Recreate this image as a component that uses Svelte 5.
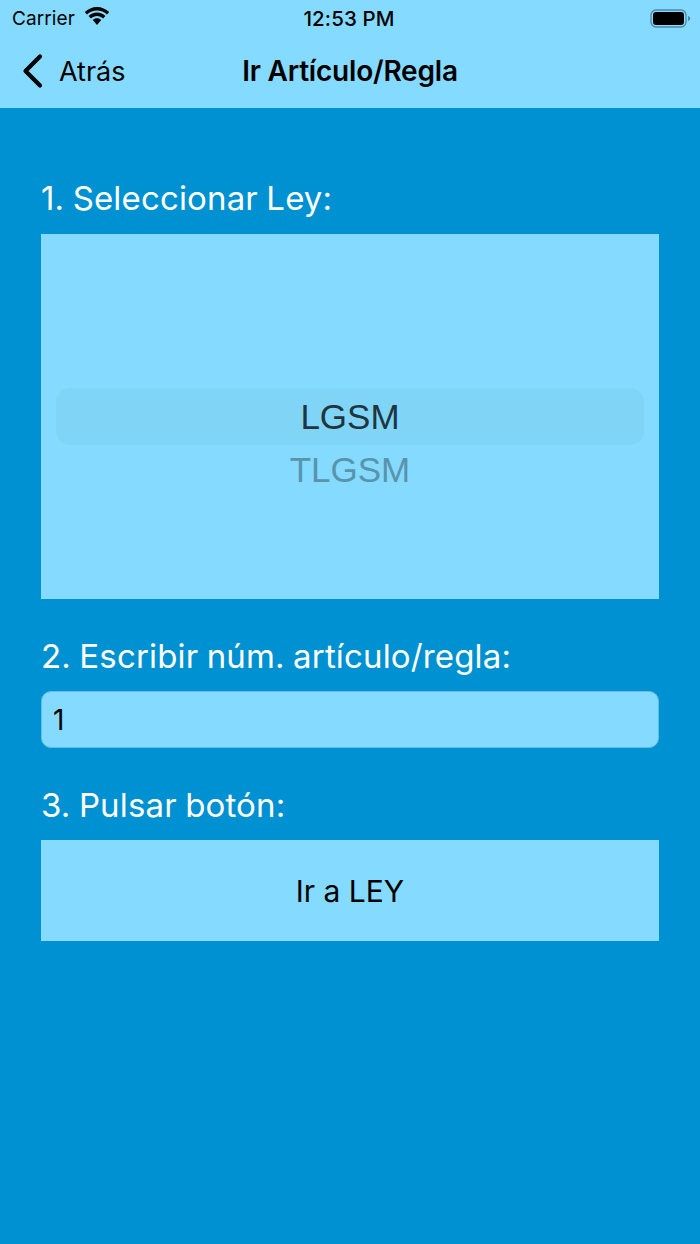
<script lang="ts">
  let articulo = $state("1");
  const leyes = ["LGSM", "TLGSM"];
</script>

<div class="page">
  <header class="top">
    <div class="status">
      <div class="carrier">
        <span>Carrier</span>
        <svg class="wifi" width="26" height="19" viewBox="0 0 26 19" aria-hidden="true">
          <path d="M13 3.400c3.900 0 7.400 1.500 10 4l2.200-2.300C22 2 17.700 0 13 0S4 2 .8 5.100L3 7.400c2.600-2.500 6.100-4 10-4z" fill="#000" />
          <path d="M13 9c2.300 0 4.500.9 6.100 2.400l2.300-2.400C19.200 6.900 16.200 5.600 13 5.600S6.800 6.900 4.600 9l2.300 2.400C8.500 9.900 10.700 9 13 9z" fill="#000" />
          <path d="M13 11.300c-1.600 0-3.100.6-4.200 1.700l4.200 5 4.200-5c-1.100-1.100-2.600-1.700-4.200-1.700z" fill="#000" />
        </svg>
      </div>
      <span class="clock">12:53 PM</span>
      <svg class="battery" width="42" height="19" viewBox="0 0 42 19" aria-hidden="true">
        <rect x="1" y="1" width="35" height="17" rx="5" fill="none" stroke="#4f87a3" stroke-width="1.300" />
        <rect x="3" y="3" width="31" height="13" rx="3" fill="#000" />
        <path d="M38 7c1.500.4 2.200 1.300 2.200 2.500S39.500 11.600 38 12z" fill="#4f87a3" />
      </svg>
    </div>
    <nav class="bar">
      <button class="back" type="button">
        <svg width="24" height="36" viewBox="0 0 24 36" aria-hidden="true">
          <path d="M20 3.500 5.500 18 20 32.500" fill="none" stroke="#000" stroke-width="4.200" stroke-linecap="round" stroke-linejoin="round" />
        </svg>
        <span>Atrás</span>
      </button>
      <h1>Ir Artículo/Regla</h1>
    </nav>
  </header>

  <main class="content">
    <label class="step" for="ley">1. Seleccionar Ley:</label>
    <div class="picker" id="ley">
      <div class="selected">{leyes[0]}</div>
      <div class="next">{leyes[1]}</div>
    </div>

    <label class="step second" for="num">2. Escribir núm. artículo/regla:</label>
    <input id="num" class="field" bind:value={articulo} />

    <label class="step third" for="ir">3. Pulsar botón:</label>
    <button id="ir" class="go" type="button">Ir a LEY</button>
  </main>
</div>

<style>
  :global(body) {
    margin: 0;
    background: #0091d2;
  }

  .page {
    height: 1244px;
    display: flex;
    flex-direction: column;
    background: #0091d2;
    font-family: Inter, "Liberation Sans", sans-serif;
    color: #000;
    overflow: hidden;
  }

  .top {
    height: 108px;
    background: #84dbff;
    flex: none;
  }

  .status {
    height: 36px;
    padding: 0 8px;
    display: grid;
    grid-template-columns: 1fr auto 1fr;
    align-items: center;
  }

  .carrier {
    display: flex;
    align-items: center;
    gap: 9px;
    padding-left: 4px;
    font-size: 19px;
    letter-spacing: 0.1px;
  }

  .wifi {
    margin-top: -3px;
  }

  .clock {
    padding-right: 2px;
    font-weight: 500;
    font-size: 20.500px;
    letter-spacing: 0.1px;
  }

  .battery {
    justify-self: end;
  }

  .bar {
    height: 72px;
    padding: 0 20px;
    display: grid;
    grid-template-columns: 1fr auto 1fr;
    align-items: center;
  }

  .bar h1 {
    margin: -2px 0 0;
    font-size: 28px;
    font-weight: 600;
    letter-spacing: -0.2px;
  }

  .back {
    justify-self: start;
    display: flex;
    align-items: center;
    gap: 15px;
    margin-top: -2px;
    padding: 0;
    border: 0;
    background: none;
    color: #000;
    font: inherit;
    font-size: 27px;
  }

  .content {
    display: flex;
    flex-direction: column;
    padding: 70px 41px 0;
    color: #fff;
  }

  .step {
    font-size: 33px;
    line-height: 40px;
    height: 40px;
    margin-bottom: 16px;
    letter-spacing: 0.15px;
    word-spacing: -1px;
  }

  .second {
    margin-top: 37px;
    margin-bottom: 15px;
  }

  .third {
    margin-top: 37px;
    margin-bottom: 15px;
  }

  .picker {
    height: 365px;
    padding: 154px 15px 0;
    box-sizing: border-box;
    background: #84dbff;
    text-align: center;
    font-family: "Liberation Sans", Inter, sans-serif;
    font-size: 35px;
    color: #1f3540;
  }

  .selected {
    height: 57px;
    line-height: 58px;
    border-radius: 14px;
    background: #80d4f5;
  }

  .next {
    line-height: 50px;
    color: #5a93ac;
  }

  .field {
    height: 57px;
    box-sizing: border-box;
    padding: 0 11px;
    border: 1px solid #63bde6;
    border-radius: 10px;
    background: #84dbff;
    color: #000;
    font: inherit;
    font-size: 28px;
    outline: none;
  }

  .go {
    height: 101px;
    border: 0;
    padding: 0;
    background: #84dbff;
    color: #000;
    font: inherit;
    font-size: 30px;
  }
</style>
